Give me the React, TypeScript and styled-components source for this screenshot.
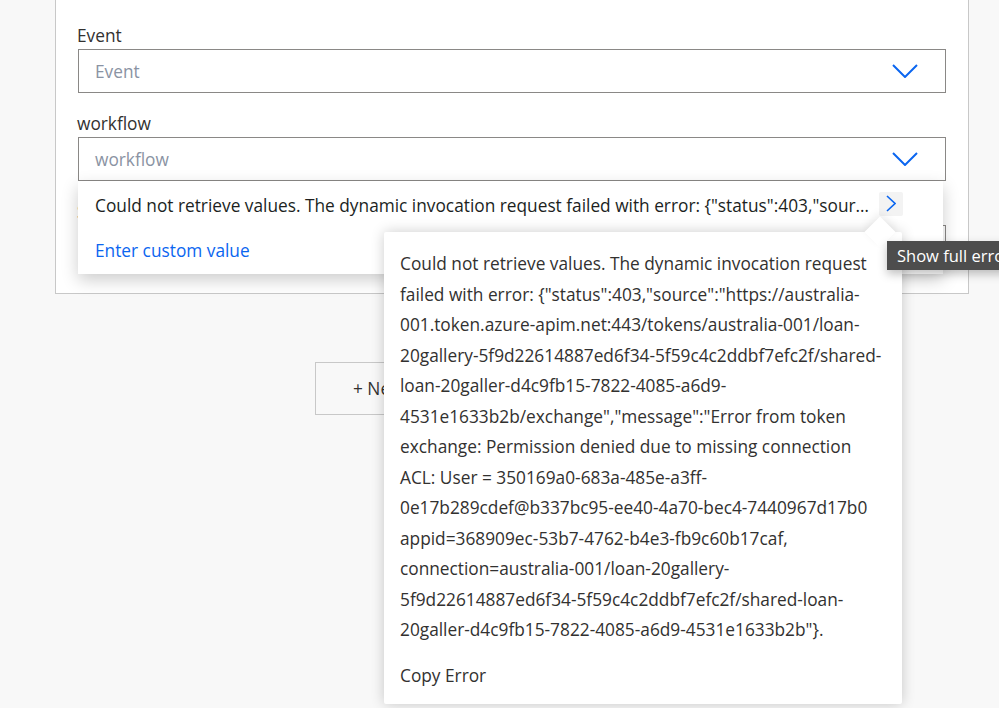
import React from "react";
import styled, { createGlobalStyle } from "styled-components";

const GlobalStyle = createGlobalStyle`
  html, body {
    margin: 0;
    padding: 0;
    background: #f8f8f8;
    overflow: hidden;
    font-family: "Open Sans", "Noto Sans", sans-serif;
    color: #323130;
  }
`;

const Page = styled.div`
  position: relative;
  width: 999px;
  height: 708px;
  overflow: hidden;
`;

const Card = styled.section`
  margin-left: 55px;
  width: 914px;
  box-sizing: border-box;
  background: #fff;
  border: 1px solid #c8c8c8;
  border-top: none;
  padding: 25px 22px 24px 21px;
  display: flex;
  flex-direction: column;
  gap: 20px;
`;

const Field = styled.div`
  position: relative;
  display: flex;
  flex-direction: column;
  gap: 2px;
`;

const Label = styled.label`
  font-size: 17.3px;
  line-height: 22px;
  color: #323130;
`;

const SelectBox = styled.div`
  height: 44px;
  margin-left: 1px;
  box-sizing: border-box;
  border: 1px solid #8a8886;
  display: flex;
  align-items: center;
  justify-content: space-between;
  padding: 0 27px 0 16px;
  font-size: 17.3px;
`;

const Placeholder = styled.span`
  color: #8a93a3;
`;

const Dropdown = styled.div`
  position: absolute;
  left: 1px;
  top: 100%;
  width: 865px;
  padding-bottom: 3px;
  background: #fff;
  box-shadow: 0 6px 16px rgba(0, 0, 0, 0.2);
  z-index: 2;
  display: flex;
  flex-direction: column;
`;

const ErrorRow = styled.div`
  height: 49px;
  display: flex;
  align-items: center;
  padding: 0 40px 0 17px;
  gap: 4px;
  font-size: 17.3px;
  color: #201f1e;
`;

const ErrorText = styled.span`
  flex: 1;
  min-width: 0;
  white-space: nowrap;
  overflow: hidden;
  text-overflow: ellipsis;
`;

const IconButton = styled.button`
  width: 24px;
  height: 24px;
  padding: 0;
  border: none;
  border-radius: 2px;
  background: #f3f3f3;
  display: flex;
  align-items: center;
  justify-content: center;
  margin-top: -4px;
`;

const CustomValue = styled.div`
  height: 41px;
  display: flex;
  align-items: center;
  padding: 0 17px;
  font-size: 17.3px;
  color: #0b66f0;
`;

const NewStep = styled.button`
  margin: 68px 0 0 315px;
  height: 53px;
  padding: 0 37px;
  border: 1px solid #c8c8c8;
  background: #f8f8f8;
  font-family: inherit;
  font-size: 17.3px;
  color: #323130;
`;

const Callout = styled.div`
  position: absolute;
  left: 384px;
  top: 232px;
  width: 518px;
  height: 472px;
  box-sizing: border-box;
  background: #fff;
  box-shadow: 0 0 14px rgba(0, 0, 0, 0.2);
  border-radius: 2px;
  padding: 17px 18px 0 16px;
  z-index: 3;
  &::before {
    content: "";
    position: absolute;
    left: 485px;
    top: -11px;
    width: 22px;
    height: 22px;
    background: #fff;
    transform: rotate(45deg);
    box-shadow: -3px -3px 8px rgba(0, 0, 0, 0.08);
  }
`;

const ErrorBody = styled.div`
  position: relative;
  font-size: 17.3px;
  line-height: 30.5px;
  color: #323130;
  span {
    display: block;
    white-space: nowrap;
  }
`;

const CopyError = styled.div`
  position: relative;
  margin-top: 15px;
  font-size: 17.3px;
  line-height: 30.5px;
  color: #323130;
`;

const Tooltip = styled.div`
  position: absolute;
  left: 887px;
  top: 241px;
  height: 29px;
  padding: 0 10px;
  display: flex;
  align-items: center;
  background: #4d4d4d;
  color: #fff;
  font-size: 16.5px;
  white-space: nowrap;
  box-shadow: 0 4px 10px rgba(0, 0, 0, 0.25);
  z-index: 4;
`;

const ChevronDown = () => (
  <svg width="26" height="14" viewBox="0 0 26 14">
    <polyline points="1,1 13,13 25,1" fill="none" stroke="#0b66f0" strokeWidth="2" />
  </svg>
);

const ChevronRight = () => (
  <svg width="10" height="17" viewBox="0 0 10 17">
    <polyline points="1,1 9,8.5 1,16" fill="none" stroke="#0b66f0" strokeWidth="1.6" />
  </svg>
);

const errorLines = [
  "Could not retrieve values. The dynamic invocation request",
  'failed with error: {"status":403,"source":"https://australia-',
  "001.token.azure-apim.net:443/tokens/australia-001/loan-",
  "20gallery-5f9d22614887ed6f34-5f59c4c2ddbf7efc2f/shared-",
  "loan-20galler-d4c9fb15-7822-4085-a6d9-",
  '4531e1633b2b/exchange","message":"Error from token',
  "exchange: Permission denied due to missing connection",
  "ACL: User = 350169a0-683a-485e-a3ff-",
  "0e17b289cdef@b337bc95-ee40-4a70-bec4-7440967d17b0",
  "appid=368909ec-53b7-4762-b4e3-fb9c60b17caf,",
  "connection=australia-001/loan-20gallery-",
  "5f9d22614887ed6f34-5f59c4c2ddbf7efc2f/shared-loan-",
  '20galler-d4c9fb15-7822-4085-a6d9-4531e1633b2b"}.',
];

const App = () => {
  return (
    <Page>
      <GlobalStyle />
      <Card>
        <Field>
          <Label>Event</Label>
          <SelectBox>
            <Placeholder>Event</Placeholder>
            <ChevronDown />
          </SelectBox>
        </Field>
        <Field>
          <Label>workflow</Label>
          <SelectBox>
            <Placeholder>workflow</Placeholder>
            <ChevronDown />
          </SelectBox>
          <Dropdown>
            <ErrorRow>
              <ErrorText>
                Could not retrieve values. The dynamic invocation request failed with error:
                {' {"status":403,"source":"https://australia-001.token.azure-apim.net:443"}'}
              </ErrorText>
              <IconButton>
                <ChevronRight />
              </IconButton>
            </ErrorRow>
            <CustomValue>Enter custom value</CustomValue>
          </Dropdown>
        </Field>
        <Field>
          <Label>Schedule</Label>
          <SelectBox>
            <Placeholder>Schedule</Placeholder>
            <ChevronDown />
          </SelectBox>
        </Field>
      </Card>
      <NewStep>+ New step</NewStep>
      <Callout>
        <ErrorBody>
          {errorLines.map((line, i) => (
            <span key={i}>{line}</span>
          ))}
        </ErrorBody>
        <CopyError>Copy Error</CopyError>
      </Callout>
      <Tooltip>Show full error</Tooltip>
    </Page>
  );
};

export default App;
